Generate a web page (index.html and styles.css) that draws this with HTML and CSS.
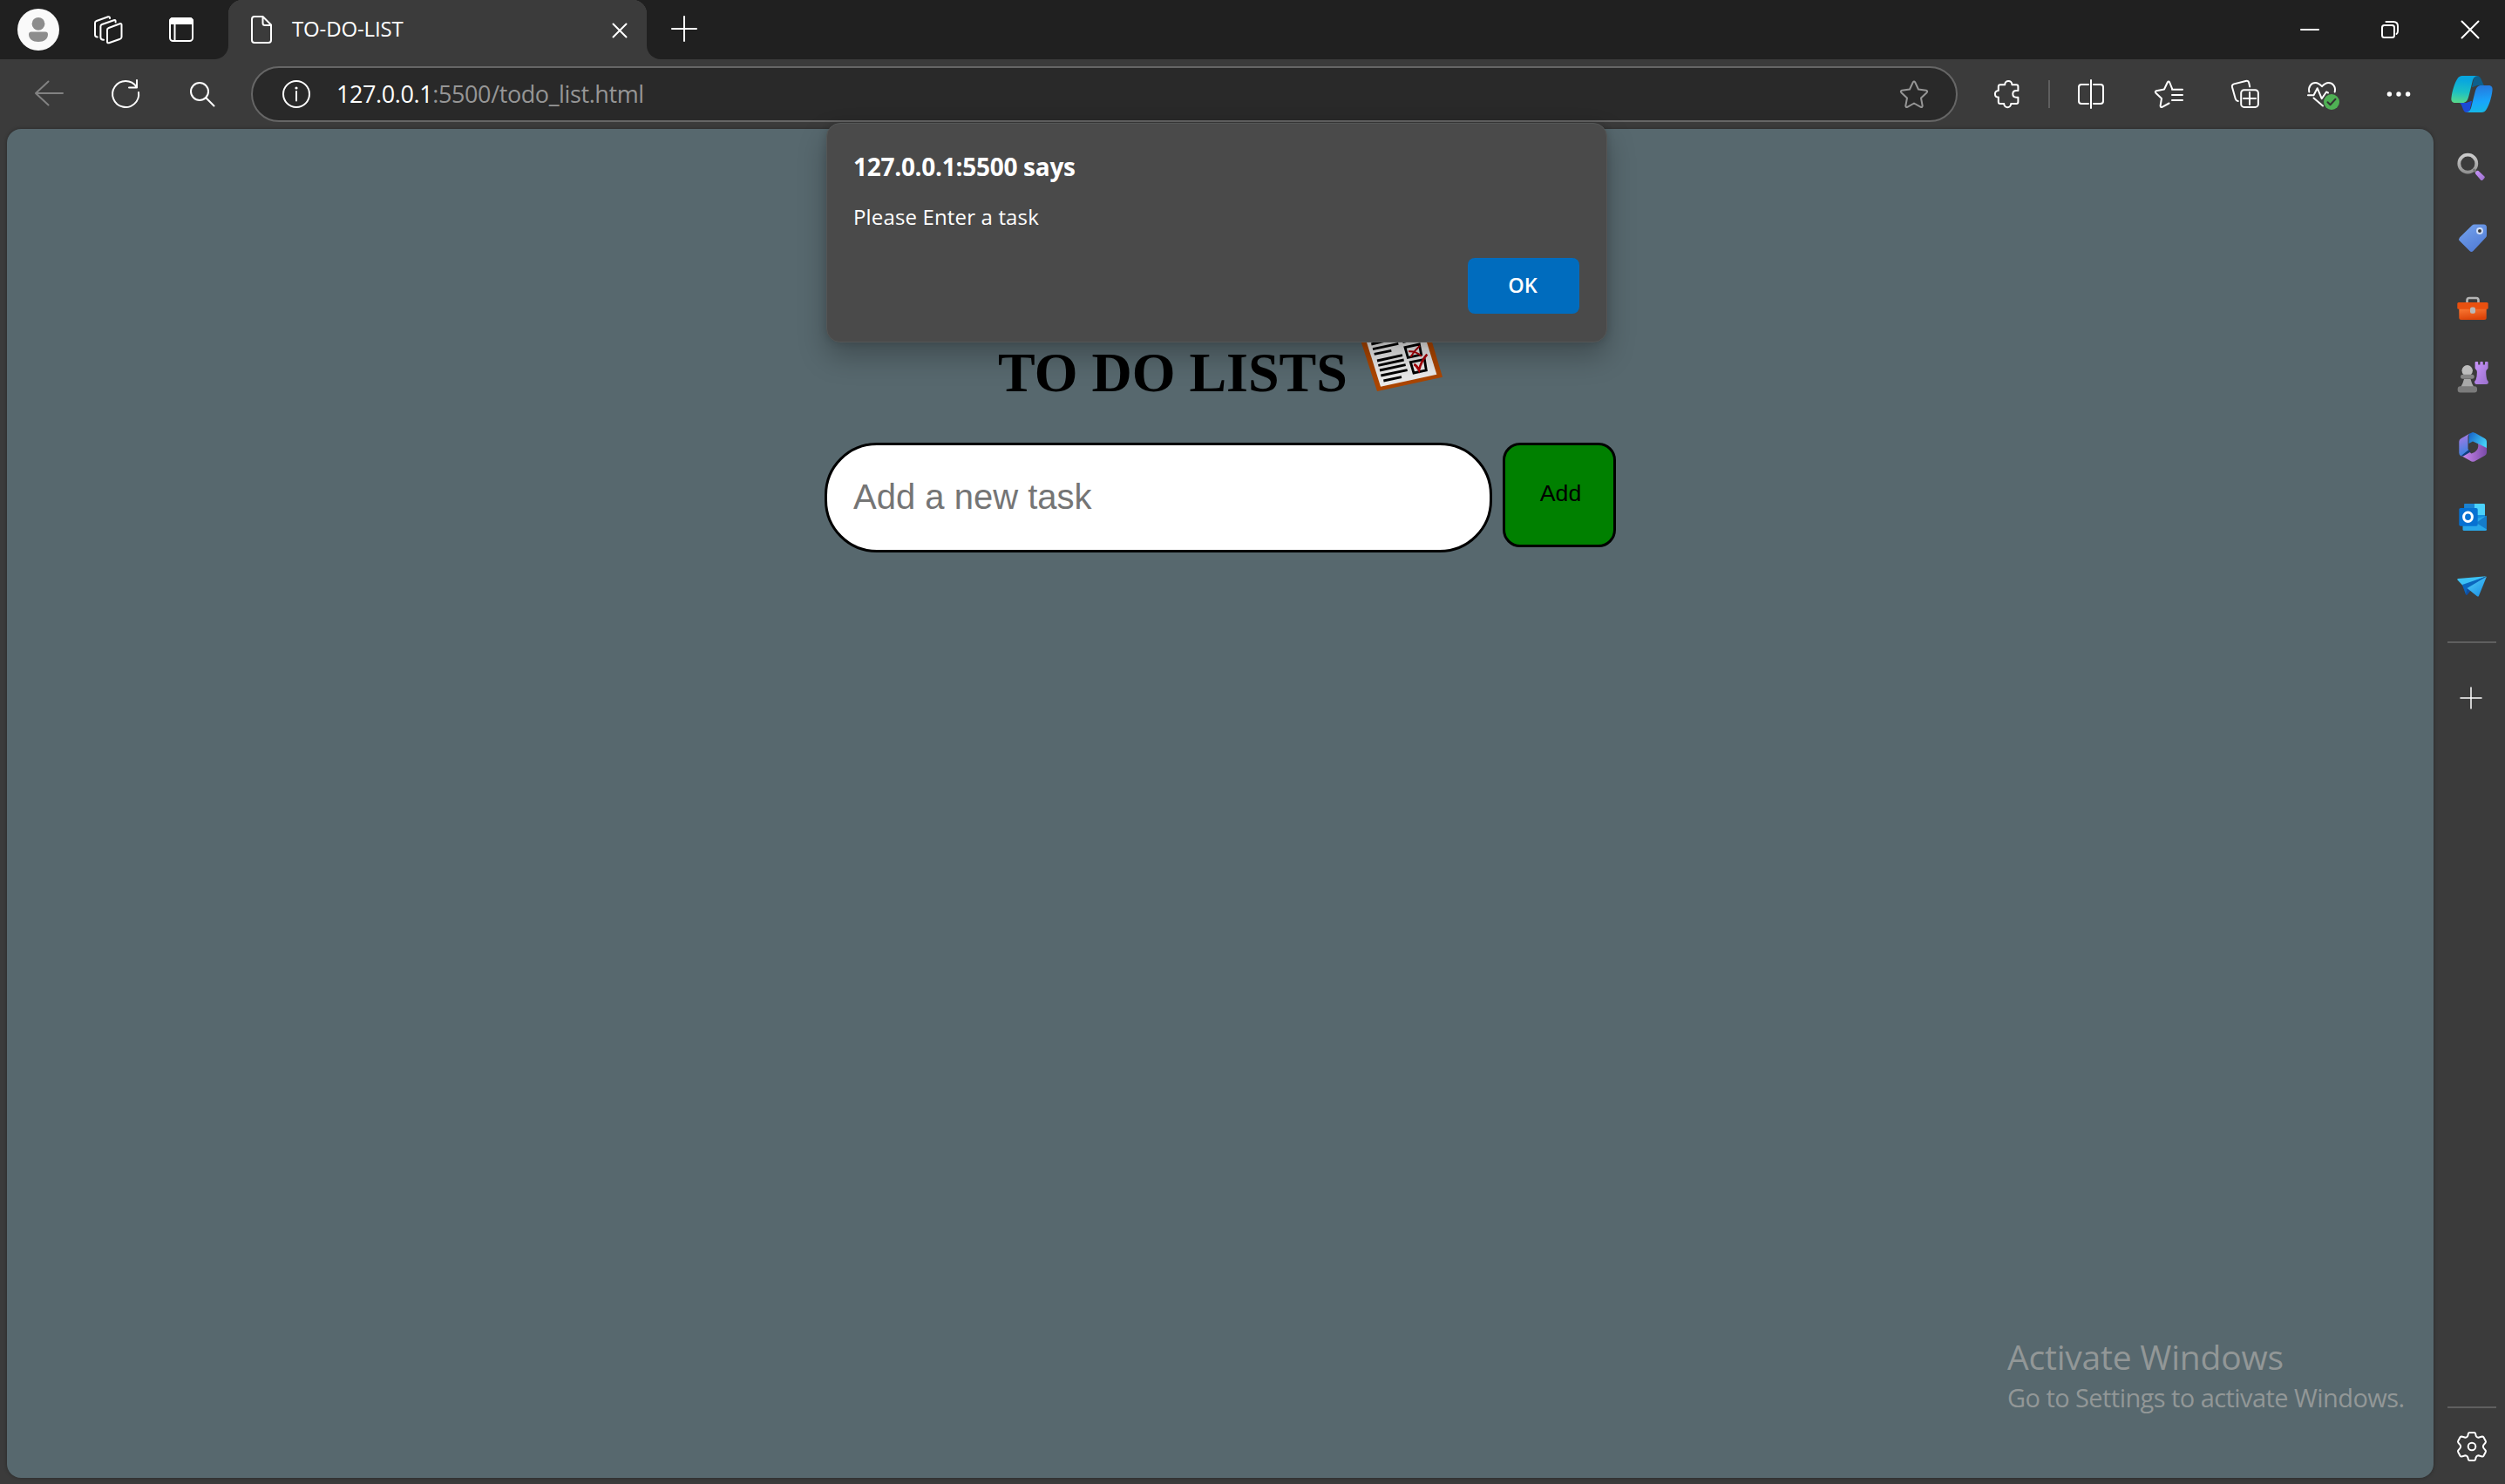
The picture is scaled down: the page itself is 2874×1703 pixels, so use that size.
FILE: index.html
```html
<!DOCTYPE html>
<html lang="en">
<head>
<meta charset="utf-8">
<title>TO-DO-LIST</title>
<link rel="stylesheet" href="styles.css">
</head>
<body>
<div class="window">
  <header class="titlebar">
    <div class="titlebar-left">
      <svg class="icon avatar" viewBox="0 0 48 48"><circle cx="24" cy="24" r="24" fill="#fafafa"/><circle cx="24" cy="17.300" r="7.400" fill="#8d8d8d"/><path d="M16 26.500h16q3 0 3 3c0 5-4.500 8.500-11 8.500s-11-3.500-11-8.500q0-3 3-3z" fill="#8d8d8d"/></svg>
      <svg class="icon workspaces" viewBox="0 0 48 48"><path d="M24.800 22 37.500 17.200q2-.6 2 1.300V32.500q0 1.500-1.600 2.200L25 39.200q-2 .5-2-1.300V24.300q0-1.600 1.800-2.300zM32.600 15.500v-1q0-2-2-1.300L17 18q-1.600.7-1.600 2.200V33q0 2.600 3.600 2.800M26 11v-.4q-.2-1.900-2-1.300L10.800 14q-1.800.7-1.800 2.300V30q0 2.400 2.800 2.500"/></svg>
      <svg class="icon tabmenu" viewBox="0 0 48 48"><rect x="11" y="11" width="26" height="26" rx="3.500"/><path d="M11 14.500Q11 11 14.500 11h19q3.500 0 3.500 3.500V17H11z" fill="#fff"/><path d="M16.500 18v19"/></svg>
    </div>
    <div class="tab">
      <svg class="icon" viewBox="0 0 48 48"><path d="M16 9h9.500L35 18.500V36q0 3-3 3H16q-3 0-3-3V12q0-3 3-3zM25.500 9v7.500q0 2.500 2.500 2.500h7"/></svg>
      <span class="tab-title">TO-DO-LIST</span>
      <svg class="icon tab-close" viewBox="0 0 48 48"><path d="M16.500 17.500l15 15m0-15l-15 15"/></svg>
    </div>
    <svg class="icon newtab" viewBox="0 0 48 48"><path d="M24 9v28M10 23h28"/></svg>
    <div class="window-controls">
      <svg class="icon" viewBox="0 0 48 48"><path d="M14 24h20"/></svg>
      <svg class="icon" viewBox="0 0 48 48"><rect x="15" y="19" width="14" height="14" rx="2.500"/><path d="M19.500 15H28q5 0 5 5v5.500q0 2.500-1.500 3.500"/></svg>
      <svg class="icon" viewBox="0 0 48 48"><path d="M14.500 14.500l19 19m0-19l-19 19"/></svg>
    </div>
  </header>

  <nav class="toolbar">
    <div class="tools">
      <svg class="icon muted" viewBox="0 0 48 48"><path d="M40 23H9M23.500 9.500L9 23l14.500 13.500"/></svg>
      <svg class="icon" viewBox="0 0 48 48"><path d="M39 22A15 15 0 1 1 36.500 15.500M37 8v8.500h-9"/></svg>
      <svg class="icon" viewBox="0 0 48 48"><circle cx="21" cy="21" r="10"/><path d="M28.300 28.300L37.500 37.500"/></svg>
    </div>
    <div class="address">
      <svg class="icon" viewBox="0 0 48 48"><circle cx="24" cy="24" r="15"/><path d="M24 21v10.500"/><circle cx="24" cy="17" r="1.600" fill="#fff" stroke="none"/></svg>
      <span class="url"><b>127.0.0.1</b>:5500/todo_list.html</span>
      <svg class="icon star" viewBox="0 0 48 48"><path d="M22.800 10.300q1.200-1.500 2.400 0L29 18.500l9 1.300q2 .7.600 2.400L32 28.500l1.700 9q-.2 2-2 1.300L24 34.500l-7.700 4.300q-1.800.7-2-1.300l1.700-9-6.600-6.300q-1.400-1.700.6-2.400l9-1.300z"/></svg>
    </div>
    <div class="tools">
      <svg class="icon" viewBox="0 0 48 48"><path d="M15.800 13.200h5.400c0-5.500 8.200-5.500 8.200 0h5q2 0 2 2V20h-2.200c-5.200 0-5.200 7.700 0 7.700h2.200V33q0 2-2 2h-6.200c0 5.500-8 5.500-8 0h-4.400q-2 0-2-2v-5.400c-5.200 0-5.200-7.700 0-7.700v-4.700q0-2 2-2z"/></svg>
    </div>
    <span class="separator"></span>
    <div class="tools">
      <svg class="icon" viewBox="0 0 48 48"><path d="M24 8v32M21 13h-8q-3 0-3 3v16q0 3 3 3h8M27 13h8q3 0 3 3v16q0 3-3 3h-8"/></svg>
      <svg class="icon favorites" viewBox="0 0 48 48"><path d="M28.200 18l-3-7.500q-1.200-2-2.400 0L19 18.500l-9 1.700q-2 .8-.6 2.500l6.600 6.300-1.400 8.500q.2 2 2 1.300l8-4.300M28 18.800h12M28 25h12M28 31h12"/></svg>
      <svg class="icon" viewBox="0 0 48 48"><rect x="19.200" y="19.200" width="19.700" height="19.700" rx="3.500"/><path d="M29 22v14M22 29h14M15.700 32q-2.300-.3-3-2.700L9 16q-.6-2.800 2-3.600L24.500 9q3-.7 3.700 2l1 4.500"/></svg>
      <svg class="icon" viewBox="0 0 48 48"><path d="M9.300 21.500C8 15 12 11 16.500 11c3.500 0 5.500 2 7.500 4.200 2-2.200 4-4.200 7.500-4.200 4.500 0 8.700 4 7.200 10.500M8 25.200h6.500l4.200-8 5 12 5.300-7.700 2 1M14.500 28.500L25 37.500"/><circle cx="35" cy="33" r="9" fill="#4fb054" stroke="none"/><path d="M30.500 33.200l3 3 6-6.400" stroke="#333"/></svg>
      <svg class="icon" viewBox="0 0 48 48"><g fill="#fff" stroke="none"><circle cx="13.400" cy="24" r="2.700"/><circle cx="24" cy="24" r="2.700"/><circle cx="34.600" cy="24" r="2.700"/></g></svg>
    </div>
    <svg class="icon copilot" viewBox="0 0 48 48">
      <defs>
        <linearGradient id="cpa" x1=".4" y1="0" x2=".3" y2="1"><stop offset=".15" stop-color="#08a6df"/><stop offset=".6" stop-color="#1cc0c4"/><stop offset="1" stop-color="#57d98b"/></linearGradient>
        <linearGradient id="cpb" x1=".4" y1="1" x2=".3" y2="0"><stop offset="0" stop-color="#2678dd"/><stop offset=".6" stop-color="#18a5fb"/><stop offset="1" stop-color="#16b8e4"/></linearGradient>
      </defs>
      <g stroke="none">
        <path d="M27 3h3c5 0 5 7 8 11h-6c-4 0-5 2-8 2z" fill="#0d5f8c"/>
        <path d="M21 45h-3c-5 0-4-8-8-11h6c4 0 5-2 8-2z" fill="#1b4bd6"/>
        <path d="M13 3h18c-4 0-5.500 3-6.500 7l-4 16c-1.500 6-3.500 8-7.500 8H5c-4 0-5-2.500-4.500-6C1.500 20 4 12 7 7c1.800-3 3.500-4 6-4z" fill="url(#cpa)"/>
        <path d="M13 3h18c-4 0-5.500 3-6.500 7l-4 16c-1.500 6-3.500 8-7.500 8H5c-4 0-5-2.500-4.500-6C1.500 20 4 12 7 7c1.800-3 3.500-4 6-4z" fill="url(#cpb)" transform="rotate(180 24 24)"/>
      </g>
    </svg>
  </nav>

  <div class="body">
    <main class="page">
      <h1 class="heading">TO DO LISTS
        <svg class="clipboard" viewBox="0 0 100 100">
          <g transform="translate(-155 -219) scale(.33333)">
            <path d="M540 957L460 710L700 690L765 908z" fill="#aa4500"/>
            <path d="M552 941L480 712L684 700L745 899z" fill="#e9e9e9"/>
            <g stroke="#000" stroke-width="8.500" fill="none"><path d="M520 795l46-11M525 812l88-19M530 829l59-12M540 852l87-19M544 868l88-19M549 885l89-19M553 903l91-19M562 921l62-13M628 788l40-10"/><path d="M636 806l49-11 7 36-46 10zM655 857l48-10 6 38-43 9z"/></g>
            <g stroke="#a80008" stroke-width="6" fill="none"><path d="M648 820q25-2 45 16M687 800q-20 18-32 39"/><path d="M667 864q10 5 17 20 8-32 28-54" stroke-width="8"/></g>
          </g>
        </svg>
      </h1>
      <form class="task-form">
        <input class="task-input" type="text" placeholder="Add a new task">
        <button class="task-add" type="button">Add</button>
      </form>
      <div class="watermark">
        <div class="watermark-title">Activate Windows</div>
        <div class="watermark-text">Go to Settings to activate Windows.</div>
      </div>
    </main>
    <aside class="sidebar">
      <div class="apps">
        <svg class="icon" viewBox="0 0 48 48"><defs><linearGradient id="gl" x2="0" y2="1"><stop stop-color="#ccc"/><stop offset="1" stop-color="#929292"/></linearGradient><linearGradient id="pu" x2="1" y2="1"><stop stop-color="#c994fb"/><stop offset="1" stop-color="#9a70cc"/></linearGradient></defs><circle cx="19.300" cy="18.700" r="10" stroke="url(#gl)" stroke-width="3.800"/><path d="M26.500 26l3 3" stroke="#777" stroke-width="3"/><path d="M31.500 27l7 6.500q.8 1-.2 2l-2 2.200q-1 .8-2 0l-6-7q-.8-1 0-2l1.600-1.700q.8-.7 1.600 0z" fill="url(#pu)" stroke="none"/></svg>
        <svg class="icon" viewBox="0 0 48 48"><defs><linearGradient id="tg" x2=".6" y2="1"><stop stop-color="#76a4ee"/><stop offset="1" stop-color="#527dd6"/></linearGradient></defs><path d="M27 8.500h10.500q3.500 0 3.500 3.500v9q0 1.500-1 2.500L25.500 39q-2 1.800-4 0L10 27.500q-1.800-2 0-4L24 9.700q1.200-1.200 3-1.200zM33 12.200a3.800 3.800 0 1 0 .1 0z" fill="url(#tg)" fill-rule="evenodd" stroke="none"/><circle cx="33" cy="16" r="3" stroke="#cfe0ff"/></svg>
        <svg class="icon" viewBox="0 0 48 48"><defs><linearGradient id="tb" x2=".3" y2="1"><stop stop-color="#fb7a35"/><stop offset="1" stop-color="#dd4409"/></linearGradient></defs><path d="M18.500 19v-3.500q0-2.500 2.500-2.500h8q2.500 0 2.500 2.500V19" stroke="#b5b5b5" stroke-width="2.600"/><g stroke="none"><path d="M9.300 25h31.400v10.500q0 2.500-2.500 2.500H11.800q-2.500 0-2.500-2.500z" fill="url(#tb)"/><rect x="7.300" y="18" width="35.400" height="7.800" rx="1.500" fill="#e9500f"/><rect x="22" y="23.500" width="6" height="7.300" rx="2" fill="#b9b9b9"/></g></svg>
        <svg class="icon" viewBox="0 0 48 48"><g stroke="none"><path d="M27.600 7q0-1 1-1h1.600q1 0 1 1v2.500h2.200V7q0-1 1-1h1.400q1 0 1 1v2.500H39V7q0-1 1-1h1.600q1 0 1 1v6q0 1.300-1.500 2.300-1 .8-.9 3 .2 6 1.300 8.700 1.500 1.500 1.500 3t-2 2H29q-2-.5-2-2.500 0-1.300 1.500-2.500 1.500-4 1.400-9 0-1.800-1-2.700-1.300-1-1.300-2.300z" fill="url(#pu)"/><path d="M15 26h7.500q1 4.500 4 9.500H11q3-5 4-9.500z" fill="#a9a9a9"/><circle cx="18.700" cy="16.300" r="6.200" fill="#bcbcbc"/><rect x="11" y="20.700" width="15.700" height="5" rx="2.500" fill="#858585"/><rect x="7.700" y="34.300" width="22.300" height="7.200" rx="3" fill="#7b7b7b"/></g></svg>
        <svg class="icon" viewBox="0 0 48 48"><defs><linearGradient id="ma" x2="1" y2=".6"><stop stop-color="#1560c8"/><stop offset="1" stop-color="#45d3f8"/></linearGradient><linearGradient id="mb" x2=".2" y2="1"><stop stop-color="#b278e4"/><stop offset="1" stop-color="#3b82e0"/></linearGradient><linearGradient id="mc" x2="1" y2="0"><stop stop-color="#cf8df0"/><stop offset="1" stop-color="#7a4aa8"/></linearGradient></defs><g stroke="none"><path d="M20.500 9L25 7l3 1 11 6.300q2 1.200 2 3.500v10L30.500 20l-5.500-2.500-4.500 2.500z" fill="url(#ma)"/><path d="M21.500 8.500L11.500 14.300q-2.200 1.200-2.200 3.500v13q0 3 2.500 3.700L21 29l-1.500-3V12q0-2.500 2-3.500z" fill="url(#mb)"/><path d="M11.500 33.700l11.500 6.500q2.200 1 4.400 0L39 33.700q2-1.300 2-3.400V25L31 20q1.500 6-4 10l-3.500 1.500L21 29.500q-5 4.500-9.500 4.200z" fill="url(#mc)"/><path d="M11.500 34.200q1 .6 3 0l8-4.700-2-2.500z" fill="#103f80"/></g></svg>
        <svg class="icon" viewBox="0 0 48 48"><g stroke="none"><rect x="15.300" y="9" width="23.700" height="24" rx="1.500" fill="#1490df"/><path d="M27 9h10.500q1.500 0 1.500 1.500V22H27z" fill="#4bd2fb"/><path d="M15.300 9H27v7H15.300z" fill="#1b83d2"/><path d="M13.500 30l27.500-7v15.500q0 1.500-1.500 1.500H15q-1.500 0-1.500-1.500z" fill="#27a7ea"/><path d="M41 22.500v16L29 31z" fill="#147cca"/><rect x="9.300" y="14" width="21.400" height="20.700" rx="1.800" fill="#0671d2"/></g><ellipse cx="19.500" cy="24.300" rx="4.900" ry="5.300" stroke-width="3"/></svg>
        <svg class="icon" viewBox="0 0 48 48"><defs><linearGradient id="te" x2=".8" y2="1"><stop stop-color="#51d0fa"/><stop offset="1" stop-color="#1d91e4"/></linearGradient></defs><g stroke="none"><path d="M13 22l4.300 11.700q1 .6 1.700-.4l4-5L38 14z" fill="#114ea0"/><path d="M7.300 15.700q0-.7 1-.8L40.500 12.300 14 23.500l-6.500-7z" fill="#3cc2f5"/><path d="M13 22L40.500 12.500 18.700 26.500 17 33z" fill="#0b66bd"/><path d="M18.500 26L41 12.600 32 34.700q-.6 1.400-2 .6z" fill="url(#te)"/></g></svg>
      </div>
      <span class="rule"></span>
      <svg class="icon add-app" viewBox="0 0 48 48"><path d="M23 12v24M11 24h24" stroke-width="1.500"/></svg>
      <span class="rule rule-bottom"></span>
      <svg class="icon settings" viewBox="0 0 48 48"><path d="M21.200 8h5.600q1.200.2 1.400 1.500.4 4 3.300 4.200 2.500-.9 4.400-1.200 1 0 1.500.8l2.300 4.200q.7 1.300-.2 2.200Q36.800 22.400 36.800 24t2.700 4.300q.9.900.2 2.200l-2.300 4.200q-.5.800-1.500.8-1.900-.3-4.400-1.200-2.900.2-3.300 4.200-.2 1.300-1.400 1.500h-5.600q-1.200-.2-1.400-1.500-.4-4-3.300-4.200-2.500.9-4.400 1.200-1 0-1.500-.8L8.300 30.500q-.7-1.300.2-2.200Q11.200 25.600 11.200 24t-2.700-4.300q-.9-.9-.2-2.200l2.300-4.200q.5-.8 1.500-.8 1.900.3 4.400 1.200 2.900-.2 3.300-4.200.2-1.300 1.400-1.500z"/><circle cx="24" cy="24" r="4.300"/></svg>
    </aside>
  </div>

  <div class="dialog" role="alertdialog">
    <div class="dialog-title">127.0.0.1:5500 says</div>
    <div class="dialog-text">Please Enter a task</div>
    <button class="dialog-ok" type="button">OK</button>
  </div>
</div>
</body>
</html>
```
FILE: styles.css
```css
* { box-sizing: border-box; }

body {
  margin: 0;
  background: #3b3b3b;
  font-family: "Open Sans", "Noto Sans", sans-serif;
  color: #fff;
}

.window {
  position: relative;
  display: flex;
  flex-direction: column;
  width: 2874px;
  height: 1703px;
  overflow: hidden;
}

.icon {
  display: block;
  flex: none;
  width: 48px;
  height: 48px;
  fill: none;
  stroke: #fff;
  stroke-width: 2;
  stroke-linecap: round;
  stroke-linejoin: round;
}
.muted { stroke: #828282; }

/* Title bar */
.titlebar {
  display: flex;
  height: 68px;
  background: #3b3b3b;
}
.titlebar-left {
  display: flex;
  align-items: center;
  width: 262px;
  padding-left: 20px;
  background: #202020;
  border-bottom-right-radius: 16px;
}
.avatar { stroke: none; }
.workspaces { margin-left: 32px; }
.tabmenu { margin-left: 36px; }

.tab {
  display: flex;
  align-items: center;
  width: 480px;
  padding: 0 7px 0 14px;
  background:
    radial-gradient(circle at 16px 16px, transparent 16px, #202020 16.5px) left top / 16px 16px no-repeat,
    radial-gradient(circle at 0 16px, transparent 16px, #202020 16.5px) right top / 16px 16px no-repeat,
    #3b3b3b;
}
.tab-title {
  margin-left: 11px;
  padding-bottom: 2px;
  font-size: 24px;
  line-height: 32px;
  letter-spacing: -0.15px;
}
.tab-close { margin-left: auto; }

.newtab {
  width: 91px;
  height: 68px;
  padding: 10px 24px 10px 19px;
  background: #202020;
  border-bottom-left-radius: 16px;
}
.window-controls {
  display: flex;
  flex: 1;
  align-items: center;
  justify-content: flex-end;
  gap: 44px;
  padding-right: 16px;
  background: #202020;
}

/* Toolbar */
.toolbar {
  display: flex;
  align-items: center;
  height: 80px;
  padding-left: 32px;
}
.tools { display: flex; gap: 40px; }
.address {
  display: flex;
  align-items: center;
  width: 1958px;
  height: 64px;
  margin: 0 33px 0 32px;
  padding: 0 24px 0 26px;
  background: #292929;
  border: 2px solid #666;
  border-radius: 32px;
}
.url {
  margin-left: 22px;
  padding-bottom: 2px;
  color: #969696;
  font-size: 27px;
  letter-spacing: -0.4px;
}
.url b { color: #fff; font-weight: 400; }
.star { margin-left: auto; stroke: #969696; }
.separator {
  width: 2px;
  height: 32px;
  margin: 0 23px;
  background: #5e5e5e;
}
.favorites { margin-left: 1px; }
.copilot { margin-left: 36px; }

/* Page and sidebar */
.body { display: flex; flex: 1; min-height: 0; }
.page {
  position: relative;
  width: 2784px;
  height: 1548px;
  margin-left: 8px;
  padding-top: 201px;
  background: #57686e;
  border-radius: 16px;
  box-shadow: 0 0 4px rgba(0, 0, 0, 0.3);
}
.heading {
  display: flex;
  align-items: baseline;
  justify-content: center;
  gap: 9px;
  height: 110px;
  margin: 0;
  color: #000;
  font: bold 64px/64px "Liberation Serif", serif;
}
.clipboard { width: 100px; height: 100px; }
.task-form {
  display: flex;
  align-items: flex-start;
  justify-content: center;
  gap: 12px;
  margin-top: 49px;
}
.task-input {
  width: 766px;
  height: 126px;
  padding: 0 30px 2px;
  background: #fff;
  border: 3px solid #000;
  border-radius: 60px;
  font: 40px "Liberation Sans", sans-serif;
}
.task-input::placeholder { color: #757575; }
.task-add {
  width: 130px;
  height: 120px;
  padding: 0 0 3px 3px;
  color: #000;
  background: #008000;
  border: 3px solid #000;
  border-radius: 20px;
  font: 26.667px "Liberation Sans", sans-serif;
}
.watermark {
  position: absolute;
  left: 2295px;
  top: 1383px;
  color: #929797;
  white-space: nowrap;
}
.watermark-title {
  font-size: 39px;
  line-height: 52px;
  letter-spacing: -0.2px;
}
.watermark-text {
  margin-top: 1px;
  font-size: 29px;
  line-height: 40px;
  letter-spacing: -0.56px;
}

.sidebar {
  display: flex;
  flex-direction: column;
  align-items: center;
  width: 82px;
  padding: 21px 0 19px 6px;
}
.apps { display: flex; flex-direction: column; gap: 32px; }
.rule {
  flex: none;
  width: 56px;
  height: 2px;
  margin-top: 39px;
  background: #5f5f5f;
}
.add-app { margin-top: 39px; }
.rule-bottom { margin-top: auto; }
.settings { margin-top: 20px; }

/* Alert dialog */
.dialog {
  position: absolute;
  left: 948px;
  top: 141px;
  display: flex;
  flex-direction: column;
  width: 896px;
  height: 252px;
  padding: 30px 31px 32px 30px;
  background: #4a4a4a;
  border: 1px solid #545656;
  border-radius: 16px;
  box-shadow: 0 16px 32px rgba(0, 0, 0, 0.26), 0 0 10px rgba(0, 0, 0, 0.14);
}
.dialog-title {
  font-size: 28px;
  font-weight: 700;
  line-height: 38px;
  letter-spacing: -0.28px;
}
.dialog-text {
  margin-top: 23px;
  font-size: 24px;
  line-height: 32px;
  letter-spacing: 0.15px;
}
.dialog-ok {
  width: 128px;
  height: 64px;
  margin: auto 0 0 auto;
  padding: 0 2px 2px 0;
  color: #fff;
  background: #006cbe;
  border: 0;
  border-radius: 8px;
  font: 600 23.500px "Open Sans", "Noto Sans", sans-serif;
}
```
